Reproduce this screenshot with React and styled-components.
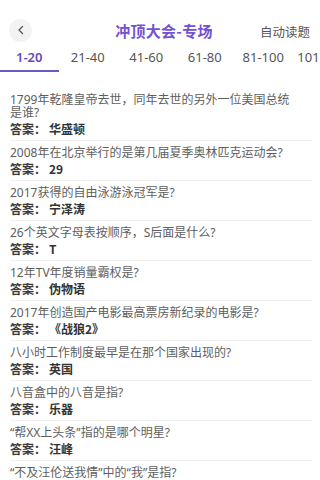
import React from "react";
import styled, { createGlobalStyle } from "styled-components";

const Global = createGlobalStyle`
  html, body { margin: 0; padding: 0; background: #fff; }
  body {
    width: 320px; height: 480px; overflow: hidden;
    font-family: "Noto Sans CJK SC", "Noto Sans", sans-serif;
  }
`;

const Page = styled.div`
  width: 320px;
  height: 480px;
  overflow: hidden;
  background: #fff;
`;

const Header = styled.div`
  height: 28px;
  padding: 16px 10px 0 9px;
  display: flex;
  align-items: center;
`;

const BackButton = styled.div`
  width: 23px;
  height: 23px;
  border-radius: 50%;
  background: #f3f3f3;
  display: flex;
  align-items: center;
  justify-content: center;
`;

const Title = styled.div`
  flex: 1;
  text-align: center;
  font-size: 15px;
  font-weight: 700;
  color: #7352d2;
  letter-spacing: 0.3px;
  margin-left: 36px;
`;

const AutoRead = styled.div`
  font-size: 12.5px;
  color: #555;
  margin-top: 3px;
`;

const Tabs = styled.div`
  display: flex;
  white-space: nowrap;
  overflow: hidden;
`;

const Tab = styled.div`
  flex: 0 0 58.5px;
  height: 26px;
  line-height: 26px;
  text-align: center;
  font-size: 13px;
  font-family: "Noto Sans", sans-serif;
  font-weight: ${(p) => (p.$active ? 600 : 400)};
  color: ${(p) => (p.$active ? "#5f4cba" : "#555")};
  border-bottom: 2px solid ${(p) => (p.$active ? "#6a58c4" : "transparent")};
`;

const List = styled.div`
  padding: 16px 8px 0 10px;
`;

const Item = styled.div`
  padding: 5px 0 4px;
  border-bottom: 1px solid #f1f1f1;
`;

const Question = styled.div`
  font-family: "Noto Sans", "Noto Sans CJK SC", sans-serif;
  font-size: 12px;
  line-height: 13px;
  color: #5e5e5e;
  padding-right: 14px;
`;

const Answer = styled.div`
  margin-top: 2px;
  font-size: 12px;
  line-height: 15px;
  color: #333;
  font-weight: 700;
  display: flex;
`;

const AnswerLabel = styled.span`
  color: #3a3a3a;
  margin-right: 3px;
`;

const items = [
  ["1799年乾隆皇帝去世，同年去世的另外一位美国总统是谁?", "华盛顿"],
  ["2008年在北京举行的是第几届夏季奥林匹克运动会?", "29"],
  ["2017获得的自由泳游泳冠军是?", "宁泽涛"],
  ["26个英文字母表按顺序，S后面是什么?", "T"],
  ["12年TV年度销量霸权是?", "伪物语"],
  ["2017年创造国产电影最高票房新纪录的电影是?", "《战狼2》"],
  ["八小时工作制度最早是在那个国家出现的?", "英国"],
  ["八音盒中的八音是指?", "乐器"],
  ["“帮XX上头条”指的是哪个明星?", "汪峰"],
  ["“不及汪伦送我情”中的“我”是指?", "汪伦"],
];

const tabs = ["1-20", "21-40", "41-60", "61-80", "81-100", "101-120"];

export default function App() {
  return (
    <Page>
      <Global />
      <Header>
        <BackButton>
          <svg width="12" height="12" viewBox="0 0 12 12">
            <path d="M7.5 2.5 L4 6 L7.5 9.5" fill="none" stroke="#555" strokeWidth="1.3" strokeLinecap="round" strokeLinejoin="round" />
          </svg>
        </BackButton>
        <Title>冲顶大会-专场</Title>
        <AutoRead>自动读题</AutoRead>
      </Header>
      <Tabs>
        {tabs.map((t, i) => (
          <Tab key={t} $active={i === 0}>{t}</Tab>
        ))}
      </Tabs>
      <List>
        {items.map(([q, a]) => (
          <Item key={q}>
            <Question>{q}</Question>
            <Answer>
              <AnswerLabel>答案：</AnswerLabel>
              {a}
            </Answer>
          </Item>
        ))}
      </List>
    </Page>
  );
}
